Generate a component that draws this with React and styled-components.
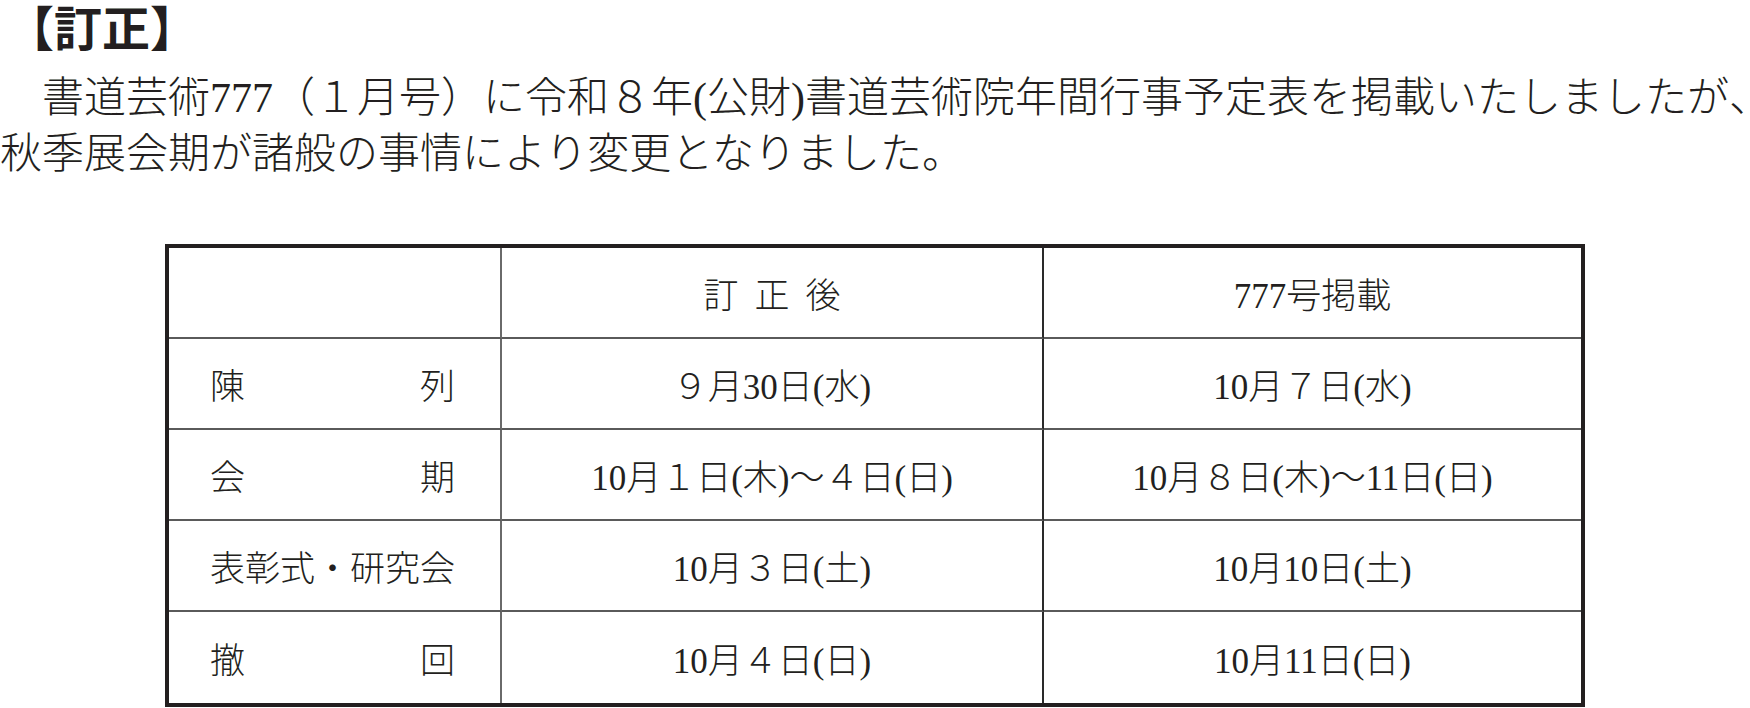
import React from 'react';
import styled, { createGlobalStyle } from 'styled-components';

const Global = createGlobalStyle`
  html, body { margin: 0; padding: 0; background: #ffffff; }
  body { overflow: hidden; }
  #root { width: 1750px; height: 708px; overflow: hidden; }
`;

const Page = styled.div`
  width: 1750px;
  height: 708px;
  box-sizing: border-box;
  color: #231f20;
  font-family: "Liberation Serif", "Noto Sans CJK JP", serif;
`;

const Title = styled.h1`
  margin: 0;
  padding: 1px 0 0 6px;
  font-family: "Noto Sans CJK JP", sans-serif;
  font-weight: 700;
  font-size: 48px;
  line-height: 49px;
`;

const Lead = styled.p`
  margin: 20px 0 0;
  font-size: 42px;
  line-height: 56px;
  font-weight: 300;
  white-space: nowrap;
`;

const Trail = styled.span`
  font-feature-settings: "halt" 1;
`;

const Grid = styled.div`
  margin: 62px 0 0 165px;
  width: 1420px;
  box-sizing: border-box;
  border: 4px solid #231f20;
  display: grid;
  grid-template-columns: 333px 542px 537px;
  grid-auto-rows: 91px;
`;

const Cell = styled.div`
  box-sizing: border-box;
  display: flex;
  align-items: center;
  justify-content: ${(p) => (p.$label ? 'flex-start' : 'center')};
  padding-left: ${(p) => (p.$label ? '41px' : '0')};
  border-right: ${(p) => (p.$last ? 'none' : `2px solid ${p.$col === 1 ? '#2a2a2a' : '#6a6a6a'}`)};
  border-bottom: ${(p) => (p.$bottom ? 'none' : '2px solid #5a5a5a')};
  font-size: 35px;
  font-weight: 300;
  white-space: nowrap;
`;

const Label = styled.span`
  display: flex;
  justify-content: space-between;
  width: 245px;
`;

const Spaced = styled.span`
  display: flex;
  gap: 16px;
`;

const rows = [
  { label: '陳列', split: true, after: '９月30日(水)', before: '10月７日(水)' },
  { label: '会期', split: true, after: '10月１日(木)～４日(日)', before: '10月８日(木)～11日(日)' },
  { label: '表彰式・研究会', split: false, after: '10月３日(土)', before: '10月10日(土)' },
  { label: '撤回', split: true, after: '10月４日(日)', before: '10月11日(日)' },
];

const IDEOGRAPHIC_SPACE = '\u3000';

export default function App() {
  return (
    <>
      <Global />
      <Page>
        <Title>【訂正】</Title>
        <Lead>
          {IDEOGRAPHIC_SPACE + '書道芸術777（１月号）に令和８年(公財)書道芸術院年間行事予定表を掲載いたしましたが'}
          <Trail>、</Trail>
          <br />
          {'秋季展会期が諸般の事情により変更となりました。'}
        </Lead>
        <Grid>
          <Cell $col={0} />
          <Cell $col={1}>
            <Spaced>
              <span>訂</span>
              <span>正</span>
              <span>後</span>
            </Spaced>
          </Cell>
          <Cell $col={2} $last>777号掲載</Cell>
          {rows.map((r, i) => {
            const bottom = i === rows.length - 1;
            return (
              <React.Fragment key={r.label}>
                <Cell $col={0} $label $bottom={bottom}>
                  <Label>
                    {r.split ? r.label.split('').map((c) => <span key={c}>{c}</span>) : <span>{r.label}</span>}
                  </Label>
                </Cell>
                <Cell $col={1} $bottom={bottom}>{r.after}</Cell>
                <Cell $col={2} $last $bottom={bottom}>{r.before}</Cell>
              </React.Fragment>
            );
          })}
        </Grid>
      </Page>
    </>
  );
}
